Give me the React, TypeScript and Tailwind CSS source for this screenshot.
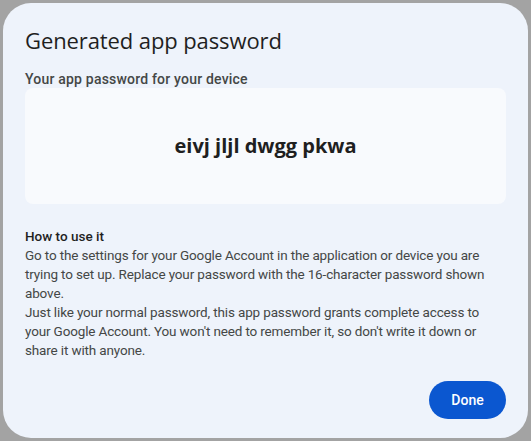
import React from 'react';

export default function App() {
  return (
    <div className="w-[531px] h-[441px] bg-[#a3a3a3] p-[3px] overflow-hidden" style={{ fontFamily: 'Roboto, "Open Sans", sans-serif' }}>
      <div className="w-[525px] h-[435px] bg-[#eef3fb] rounded-[28px] flex flex-col px-[22px] pt-[22px] pb-[18px]">
        <h1 className="text-[22px] leading-[30px] text-[#1f1f1f] font-normal" style={{ fontFamily: '"Open Sans", Roboto, sans-serif', letterSpacing: '-0.1px' }}>
          Generated app password
        </h1>
        <p className="mt-[15px] text-[14px] leading-[18px] font-medium text-[#444746] tracking-[0.2px]">Your app password for your device</p>
        <div className="h-[116px] bg-[#f8fafd] rounded-[8px] flex items-center justify-center">
          <span className="text-[20px] font-bold text-[#1f1f1f]" style={{ fontFamily: '"Open Sans", Roboto, sans-serif' }}>
            eivj jljl dwgg pkwa
          </span>
        </div>
        <div className="mt-[23px] text-[13.5px] leading-[19px] text-[#444746] tracking-[-0.15px]">
          <p className="font-medium text-[#1f1f1f] tracking-[0px]">How to use it</p>
          <p>
            Go to the settings for your Google Account in the application or device you are trying to set up. Replace your password with the 16-character password shown above.
          </p>
          <p>
            Just like your normal password, this app password grants complete access to your Google Account. You won't need to remember it, so don't write it down or share it with anyone.
          </p>
        </div>
        <div className="mt-auto flex justify-end">
          <button className="h-[38px] w-[77px] rounded-full bg-[#0b57d0] text-white text-[14px] font-medium mb-[1px]">Done</button>
        </div>
      </div>
    </div>
  );
}
